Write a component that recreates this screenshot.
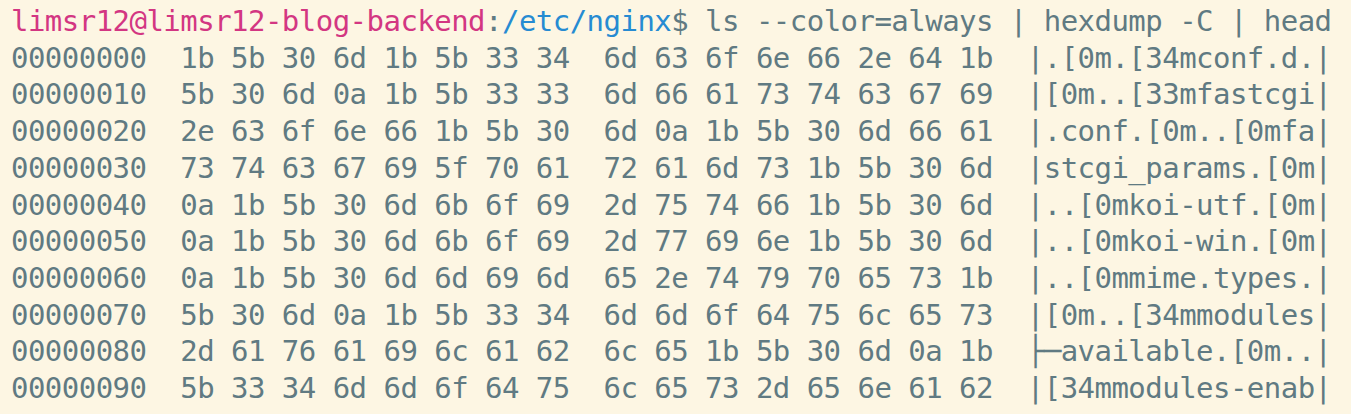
import React from "react";

// hexdump rows: offset, bytes, ascii column
const rows: string[] = [
    "00000000  1b 5b 30 6d 1b 5b 33 34  6d 63 6f 6e 66 2e 64 1b  |.[0m.[34mconf.d.|",
    "00000010  5b 30 6d 0a 1b 5b 33 33  6d 66 61 73 74 63 67 69  |[0m..[33mfastcgi|",
    "00000020  2e 63 6f 6e 66 1b 5b 30  6d 0a 1b 5b 30 6d 66 61  |.conf.[0m..[0mfa|",
    "00000030  73 74 63 67 69 5f 70 61  72 61 6d 73 1b 5b 30 6d  |stcgi_params.[0m|",
    "00000040  0a 1b 5b 30 6d 6b 6f 69  2d 75 74 66 1b 5b 30 6d  |..[0mkoi-utf.[0m|",
    "00000050  0a 1b 5b 30 6d 6b 6f 69  2d 77 69 6e 1b 5b 30 6d  |..[0mkoi-win.[0m|",
    "00000060  0a 1b 5b 30 6d 6d 69 6d  65 2e 74 79 70 65 73 1b  |..[0mmime.types.|",
    "00000070  5b 30 6d 0a 1b 5b 33 34  6d 6d 6f 64 75 6c 65 73  |[0m..[34mmodules|",
    "00000080  2d 61 76 61 69 6c 61 62  6c 65 1b 5b 30 6d 0a 1b  ├─available.[0m..|",
    "00000090  5b 33 34 6d 6d 6f 64 75  6c 65 73 2d 65 6e 61 62  |[34mmodules-enab|",
];

export default function App() {
    return (
        <div
            className="w-[1351px] h-[414px] overflow-hidden bg-[#fdf6e3] text-[#607a82] pl-[11px] pt-[3px] text-[29px] leading-[36.7px] tracking-[-0.53px] whitespace-pre"
            style={{fontFamily: '"DejaVu Sans Mono", "Liberation Mono", monospace'}}
        >
            <div>
                <span className="text-[#d33682]">limsr12@limsr12-blog-backend</span>
                <span>:</span>
                <span className="text-[#268bd2]">/etc/nginx</span>
                <span>$ ls --color=always | hexdump -C | head</span>
            </div>
            {rows.map((line) => (
                <div key={line.slice(0, 8)}>{line}</div>
            ))}
        </div>
    );
}
